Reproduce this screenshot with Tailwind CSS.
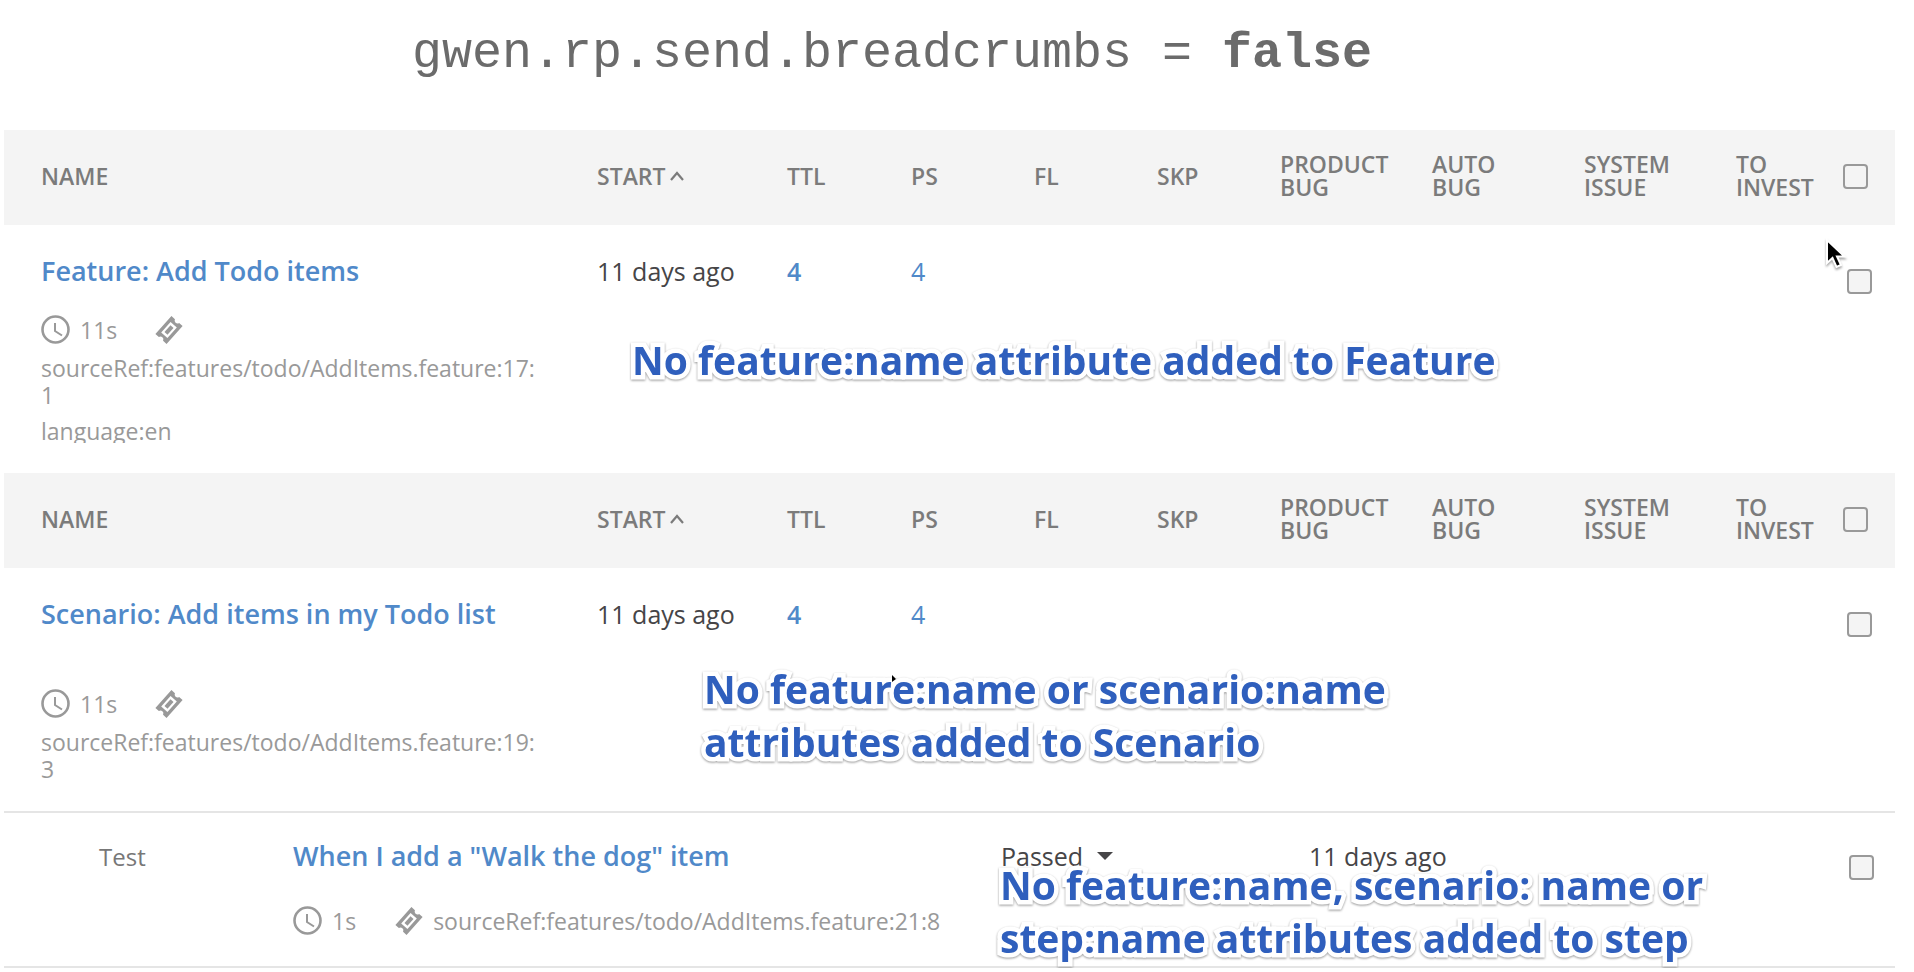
<!DOCTYPE html>
<html lang="en">
<head>
<meta charset="utf-8">
<title>gwen.rp.send.breadcrumbs</title>
<script src="https://cdn.jsdelivr.net/npm/@tailwindcss/browser@4"></script>
</head>
<body class="relative bg-white font-['Open_Sans',sans-serif] text-[#464547]">
<svg class="hidden" aria-hidden="true">
  <symbol id="clock" viewBox="0 0 29 29"><g fill="none" stroke="#999" stroke-width="2.6"><circle cx="14.5" cy="14.5" r="13"/><path d="M14 8v8l7 4.500" stroke-width="2"/></g></symbol>
  <symbol id="ticket" viewBox="0 0 28 28"><g transform="rotate(-48 14 14)"><path fill="#999" fill-rule="evenodd" d="M2 6.500h24v4.700a2.900 2.900 0 0 0 0 5.600v4.700H2v-4.700a2.900 2.900 0 0 0 0-5.600zM7 9.800v8.400h14V9.800z"/><path fill="#999" d="M9.500 12h9v4h-9z"/></g></symbol>
</svg>

<h1 class="flex h-[130px] justify-center pr-[130px] pt-[26px] font-['Liberation_Mono',monospace] text-[50px] leading-[56px] whitespace-pre text-[#6b6b6b]">gwen.rp.send.breadcrumbs = <b>false</b></h1>

<main class="ml-1 mr-[19px]">
  <section class="relative">
    <table class="w-full table-fixed text-left">
      <colgroup><col><col class="w-[190px]"><col class="w-[124px]"><col class="w-[123px]"><col class="w-[123px]"><col class="w-[123px]"><col class="w-[152px]"><col class="w-[152px]"><col class="w-[152px]"><col class="w-[107px]"><col class="w-[52px]"></colgroup>
      <thead>
        <tr class="h-[95px] bg-[#f4f4f4] text-[23px] leading-[23px] text-[#7b7b7b] *:p-0 *:pb-[3px] *:font-semibold">
          <th><span class="ml-[37px]">NAME</span></th>
          <th><button class="flex items-center gap-1 font-semibold">START<svg class="h-2.5 w-3.5" viewBox="0 0 14 10" fill="none" stroke="#7b7b7b" stroke-width="2.2"><path d="M1 9 7 2l6 7"/></svg></button></th>
          <th>TTL</th><th>PS</th><th>FL</th><th>SKP</th>
          <th>PRODUCT<br>BUG</th><th>AUTO<br>BUG</th><th>SYSTEM<br>ISSUE</th><th>TO<br>INVEST</th>
          <th><input type="checkbox" aria-label="Select all features" class="block size-[25px] appearance-none rounded border-2 border-[#999]"></th>
        </tr>
      </thead>
      <tbody>
        <tr class="h-[248px] align-top text-[25px] leading-8 *:p-0">
          <td><div class="pl-[37px] pt-[30px]">
            <a href="#" class="block text-[27px] leading-8 font-semibold text-[#5089c9]">Feature: Add Todo items</a>
            <div class="mt-7 flex h-[29px] items-center text-[23px] text-[#999]"><svg class="size-[29px]"><use href="#clock"/></svg><span class="ml-2.5">11s</span><svg class="ml-[38px] size-[28px]"><use href="#ticket"/></svg></div>
            <div class="mt-[11px] w-[500px] text-[23px] leading-[27px] break-all text-[#999]">sourceRef:features/todo/AddItems.feature:17:1</div>
            <div class="mt-[9px] h-[25px] overflow-hidden text-[23px] leading-[27px] text-[#999]">language:en</div>
          </div></td>
          <td class="pt-[30px]!">11 days ago</td>
          <td class="pt-[30px]!"><a href="#" class="font-semibold text-[#5089c9]">4</a></td>
          <td class="pt-[30px]!"><a href="#" class="text-[#5089c9]">4</a></td>
          <td></td><td></td><td></td><td></td><td></td><td></td>
          <td><input type="checkbox" aria-label="Select Feature: Add Todo items" class="mt-11 ml-1 block size-[25px] appearance-none rounded border-2 border-[#999] bg-[#f4f4f4]"></td>
        </tr>
      </tbody>
    </table>
    <p class="absolute top-[203px] left-[628px] text-[39px] leading-[53px] font-bold whitespace-nowrap text-[#2f5fbd] [paint-order:stroke_fill] [-webkit-text-stroke:9px_white] [stroke-linejoin:round] [filter:drop-shadow(0_1px_1px_rgb(0_0_0/0.4))]">No feature:name attribute added to Feature</p>
    <svg class="absolute top-[106px] right-[48px] h-[36px] w-[24px] [filter:drop-shadow(0_2px_1px_rgb(0_0_0/0.35))]" viewBox="0 0 24 36" aria-hidden="true"><path d="M4 4v23l5.500-5 4 9 4.500-2-4-8.500h7.500z" fill="#000" stroke="#fff" stroke-width="2"/></svg>
  </section>

  <section class="relative">
    <table class="w-full table-fixed text-left">
      <colgroup><col><col class="w-[190px]"><col class="w-[124px]"><col class="w-[123px]"><col class="w-[123px]"><col class="w-[123px]"><col class="w-[152px]"><col class="w-[152px]"><col class="w-[152px]"><col class="w-[107px]"><col class="w-[52px]"></colgroup>
      <thead>
        <tr class="h-[95px] bg-[#f4f4f4] text-[23px] leading-[23px] text-[#7b7b7b] *:p-0 *:pb-[3px] *:font-semibold">
          <th><span class="ml-[37px]">NAME</span></th>
          <th><button class="flex items-center gap-1 font-semibold">START<svg class="h-2.5 w-3.5" viewBox="0 0 14 10" fill="none" stroke="#7b7b7b" stroke-width="2.2"><path d="M1 9 7 2l6 7"/></svg></button></th>
          <th>TTL</th><th>PS</th><th>FL</th><th>SKP</th>
          <th>PRODUCT<br>BUG</th><th>AUTO<br>BUG</th><th>SYSTEM<br>ISSUE</th><th>TO<br>INVEST</th>
          <th><input type="checkbox" aria-label="Select all scenarios" class="block size-[25px] appearance-none rounded border-2 border-[#999]"></th>
        </tr>
      </thead>
      <tbody>
        <tr class="h-[243px] align-top text-[25px] leading-8 *:p-0">
          <td><div class="pl-[37px] pt-[30px]">
            <a href="#" class="block text-[27px] leading-8 font-semibold text-[#5089c9]">Scenario: Add items in my Todo list</a>
            <div class="mt-[59px] flex h-[29px] items-center text-[23px] text-[#999]"><svg class="size-[29px]"><use href="#clock"/></svg><span class="ml-2.5">11s</span><svg class="ml-[38px] size-[28px]"><use href="#ticket"/></svg></div>
            <div class="mt-[11px] w-[500px] text-[23px] leading-[27px] break-all text-[#999]">sourceRef:features/todo/AddItems.feature:19:3</div>
          </div></td>
          <td class="pt-[30px]!">11 days ago</td>
          <td class="pt-[30px]!"><a href="#" class="font-semibold text-[#5089c9]">4</a></td>
          <td class="pt-[30px]!"><a href="#" class="text-[#5089c9]">4</a></td>
          <td></td><td></td><td></td><td></td><td></td><td></td>
          <td><input type="checkbox" aria-label="Select Scenario: Add items in my Todo list" class="mt-11 ml-1 block size-[25px] appearance-none rounded border-2 border-[#999] bg-[#f4f4f4]"></td>
        </tr>
      </tbody>
    </table>
    <p class="absolute top-[189px] left-[700px] text-[39px] leading-[53px] font-bold whitespace-nowrap text-[#2f5fbd] [paint-order:stroke_fill] [-webkit-text-stroke:9px_white] [stroke-linejoin:round] [filter:drop-shadow(0_1px_1px_rgb(0_0_0/0.4))]">No feature:name or scenario:name<br>attributes added to Scenario</p>
    <svg class="absolute top-[202px] left-[888px] h-[7px] w-[4px]" viewBox="0 0 4 7" aria-hidden="true"><path d="M0 0l4 4-4 3z"/></svg>
  </section>

  <section class="relative flex h-[157px] items-start border-t-2 border-b-2 border-[#e5e5e5] text-[25px] leading-8 shadow-[0_2px_0_#d6f0f8]">
    <div class="w-[289px] pt-[28px] pl-[95px] text-[24px] text-[#777]">Test</div>
    <div class="w-[708px] pt-[27px]">
      <a href="#" class="block text-[27px] leading-8 font-semibold text-[#5089c9]">When I add a "Walk the dog" item</a>
      <div class="mt-[34px] flex h-[29px] items-center text-[23px] text-[#999]"><svg class="size-[29px]"><use href="#clock"/></svg><span class="ml-2.5">1s</span><svg class="ml-[39px] size-[28px]"><use href="#ticket"/></svg><span class="ml-2.5">sourceRef:features/todo/AddItems.feature:21:8</span></div>
    </div>
    <button class="flex w-[308px] items-center pt-[27px]">Passed<svg class="ml-3.5 h-2 w-4" viewBox="0 0 16 8" fill="#464547"><path d="M0 0h16L8 8z"/></svg></button>
    <div class="flex-1 pt-[27px]">11 days ago</div>
    <input type="checkbox" aria-label="Select step" class="mt-[42px] mr-[21px] block size-[25px] appearance-none rounded border-2 border-[#999] bg-[#f4f4f4]">
    <p class="absolute top-[45px] left-[996px] text-[39px] leading-[53px] font-bold whitespace-nowrap text-[#2f5fbd] [paint-order:stroke_fill] [-webkit-text-stroke:9px_white] [stroke-linejoin:round] [filter:drop-shadow(0_1px_1px_rgb(0_0_0/0.4))]">No feature:name, scenario: name or<br>step:name attributes added to step</p>
  </section>
</main>
</body>
</html>
